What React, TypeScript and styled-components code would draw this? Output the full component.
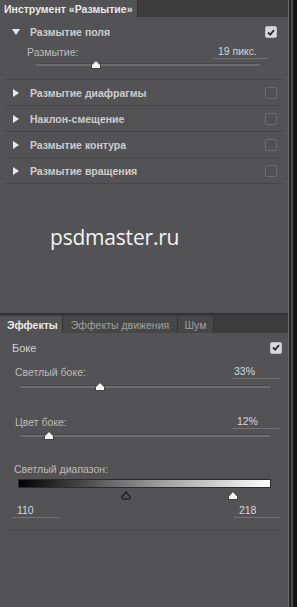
import React from 'react';
import styled, { createGlobalStyle } from 'styled-components';

const GlobalStyle = createGlobalStyle`
  html, body {
    margin: 0;
    padding: 0;
    background: #535254;
  }
  body {
    font-family: "Liberation Sans", Arial, sans-serif;
  }
`;

const Frame = styled.div`
  display: flex;
  width: 297px;
  height: 607px;
  overflow: hidden;
`;

const Panel = styled.div`
  width: 288px;
  display: flex;
  flex-direction: column;
  background: #535254;
  border-right: 1px solid #6a6a6a;
`;

const Edge = styled.div`
  flex: 1;
  background: linear-gradient(to right, #262626 0 2px, #484848 2px 4px, #141414 4px);
`;

const TabBar = styled.div`
  display: flex;
  height: 17px;
  flex-shrink: 0;
  background: #3c3c3c;
`;

const Tab = styled.div<{ $active?: boolean; $w: number }>`
  width: ${p => p.$w}px;
  display: flex;
  align-items: center;
  justify-content: ${p => (p.$active ? 'flex-start' : 'center')};
  padding-left: ${p => (p.$active ? 4 : 0)}px;
  box-sizing: border-box;
  background: ${p => (p.$active ? '#535254' : '#474747')};
  color: ${p => (p.$active ? '#e8e8e8' : '#a0a0a0')};
  font-weight: ${p => (p.$active ? 700 : 400)};
  font-size: 10.5px;
  border-right: 1px solid #333;
  white-space: nowrap;
`;

const Upper = styled.div`
  height: 296px;
  display: flex;
  flex-direction: column;
  padding-top: 2px;
  box-sizing: border-box;
`;

const Divider = styled.div`
  height: 3px;
  background: #3a3a3a;
  border-top: 1px solid #2e2e2e;
  box-sizing: border-box;
`;

const Group = styled.div<{ $pb?: number }>`
  display: flex;
  flex-direction: column;
  padding-bottom: ${p => p.$pb ?? 0}px;
  border-bottom: 1px solid #464547;
  margin: 0 5px;
`;

const Heading = styled.div<{ $h?: number; $pl?: number }>`
  height: ${p => p.$h ?? 26}px;
  display: flex;
  align-items: center;
  padding-left: ${p => p.$pl ?? 7}px;
  padding-right: 6px;
  gap: 10px;
  color: #cdcdcd;
  font-weight: 700;
  font-size: 10.5px;
`;

const HeadingPlain = styled(Heading)`
  font-weight: 400;
  font-size: 11px;
  color: #d0d0d0;
`;

const Title = styled.span`
  flex: 1;
`;

const Arrow = styled.span<{ $open?: boolean }>`
  width: 0;
  height: 0;
  ${p =>
    p.$open
      ? `border-left: 4px solid transparent; border-right: 4px solid transparent; border-top: 6px solid #e8e8e8;`
      : `border-top: 4px solid transparent; border-bottom: 4px solid transparent; border-left: 6px solid #e8e8e8; margin-left: 1px; margin-right: 1px;`}
`;

const Box = styled.span<{ $checked?: boolean }>`
  width: 12px;
  height: 12px;
  box-sizing: border-box;
  border-radius: 2px;
  display: flex;
  align-items: center;
  justify-content: center;
  background: ${p => (p.$checked ? '#d9d9d9' : '#505050')};
  border: 1px solid ${p => (p.$checked ? '#bdbdbd' : '#6c6c6c')};
`;

const FieldRow = styled.div<{ $h: number; $pl: number; $pr: number }>`
  height: ${p => p.$h}px;
  display: flex;
  align-items: center;
  justify-content: space-between;
  padding-left: ${p => p.$pl}px;
  padding-right: ${p => p.$pr}px;
  color: #bcbcbc;
  font-size: 10.5px;
`;

const Value = styled.span<{ $w: number }>`
  width: ${p => p.$w}px;
  box-sizing: border-box;
  padding-left: 2px;
  padding-bottom: 1px;
  border-bottom: 1px solid #737373;
  color: #d8d8d8;
  font-size: 10.5px;
`;

const SliderWrap = styled.div<{ $ml: number; $w: number; $h?: number }>`
  position: relative;
  margin-left: ${p => p.$ml}px;
  width: ${p => p.$w}px;
  height: ${p => p.$h ?? 10}px;
  display: flex;
  align-items: center;
`;

const Track = styled.div`
  width: 100%;
  height: 3px;
  border-radius: 2px;
  background: #6e6e6e;
  border-top: 1px solid #474747;
  box-sizing: border-box;
`;

const Thumb = styled.svg`
  position: absolute;
  top: 1px;
`;

const Watermark = styled.div`
  margin-top: 40px;
  padding-left: 50px;
  font-family: "Open Sans", "Noto Sans", sans-serif;
  font-size: 21px;
  line-height: 26px;
  color: #f2f2f2;
  letter-spacing: -0.2px;
`;

const Lower = styled.div`
  flex: 1;
  display: flex;
  flex-direction: column;
`;

const Spacer = styled.div<{ $h: number }>`
  height: ${p => p.$h}px;
  flex-shrink: 0;
`;

const Gradient = styled.div`
  margin: 2px 0 0 18px;
  width: 253px;
  height: 9px;
  background: linear-gradient(to right, #000 0%, #3a3a3a 20%, #9a9a9a 55%, #fff 100%);
  border: 1px solid #2c2c2c;
  box-sizing: border-box;
`;

const MarkerRow = styled.div`
  position: relative;
  height: 14px;
  margin-left: 18px;
`;

const Marker = styled.svg`
  position: absolute;
  top: 3px;
`;

const Rest = styled.div`
  flex: 1;
`;

const Check = () => (
  <svg width="8" height="7" viewBox="0 0 8 7">
    <path d="M1 3.5 L3.2 5.6 L7 1.2" fill="none" stroke="#2d2d2d" strokeWidth="1.8" />
  </svg>
);

const ThumbIcon = ({ x }: { x: number }) => (
  <Thumb width="10" height="9" viewBox="0 0 10 9" style={{ left: x - 5 }}>
    <path d="M5 0.5 L9.5 5 L9.5 8.5 L0.5 8.5 L0.5 5 Z" fill="#f4f4f4" stroke="#2a2a2a" strokeWidth="0.8" />
  </Thumb>
);

const Slider = ({ ml, w, pos, h }: { ml: number; w: number; pos: number; h?: number }) => (
  <SliderWrap $ml={ml} $w={w} $h={h}>
    <Track />
    <ThumbIcon x={pos} />
  </SliderWrap>
);

const blurs = ['Размытие диафрагмы', 'Наклон-смещение', 'Размытие контура', 'Размытие вращения'];

export default function App() {
  return (
    <>
      <GlobalStyle />
      <Frame>
        <Panel>
          <TabBar>
            <Tab $active $w={138}>Инструмент «Размытие»</Tab>
          </TabBar>
          <Upper>
            <Group $pb={10}>
              <Heading>
                <Arrow $open />
                <Title>Размытие поля</Title>
                <Box $checked>
                  <Check />
                </Box>
              </Heading>
              <FieldRow $h={14} $pl={22} $pr={15}>
                <span>Размытие:</span>
                <Value $w={55}>&nbsp;19 пикс.</Value>
              </FieldRow>
              <Slider ml={30} w={225} pos={61} />
            </Group>
            {blurs.map(b => (
              <Group key={b}>
                <Heading $h={25}>
                  <Arrow />
                  <Title>{b}</Title>
                  <Box />
                </Heading>
              </Group>
            ))}
            <Watermark>psdmaster.ru</Watermark>
          </Upper>
          <Divider />
          <TabBar>
            <Tab $active $w={63}>&nbsp;Эффекты</Tab>
            <Tab $w={115}>Эффекты движения</Tab>
            <Tab $w={36}>Шум</Tab>
          </TabBar>
          <Lower>
            <HeadingPlain $h={29} $pl={12}>
              <Title>Боке</Title>
              <Box $checked>
                <Check />
              </Box>
            </HeadingPlain>
            <FieldRow $h={19} $pl={15} $pr={9}>
              <span>Светлый боке:</span>
              <Value $w={47}>33%</Value>
            </FieldRow>
            <Slider ml={20} w={250} pos={80} />
            <Spacer $h={22} />
            <FieldRow $h={17} $pl={15} $pr={9}>
              <span>Цвет боке:</span>
              <Value $w={47}>&nbsp;12%</Value>
            </FieldRow>
            <Slider ml={20} w={250} pos={29} />
            <Spacer $h={21} />
            <FieldRow $h={16} $pl={14} $pr={9}>
              <span>Светлый диапазон:</span>
            </FieldRow>
            <Gradient />
            <MarkerRow>
              <Marker width="10" height="9" viewBox="0 0 10 9" style={{ left: 103 }}>
                <path d="M5 0.8 L9.2 6 Q9.2 8.2 7 8.2 L3 8.2 Q0.8 8.2 0.8 6 Z" fill="#535254" stroke="#1e1e1e" strokeWidth="1.2" />
              </Marker>
              <Marker width="10" height="9" viewBox="0 0 10 9" style={{ left: 210 }}>
                <path d="M5 0.5 L9.5 5.5 L9.5 8.5 L0.5 8.5 L0.5 5.5 Z" fill="#f4f4f4" stroke="#2a2a2a" strokeWidth="0.8" />
              </Marker>
            </MarkerRow>
            <FieldRow $h={18} $pl={12} $pr={9}>
              <Value $w={47}>&nbsp;110</Value>
              <Value $w={45}>&nbsp;218</Value>
            </FieldRow>
            <Group $pb={10}>
              <span />
            </Group>
            <Rest />
          </Lower>
        </Panel>
        <Edge />
      </Frame>
    </>
  );
}
